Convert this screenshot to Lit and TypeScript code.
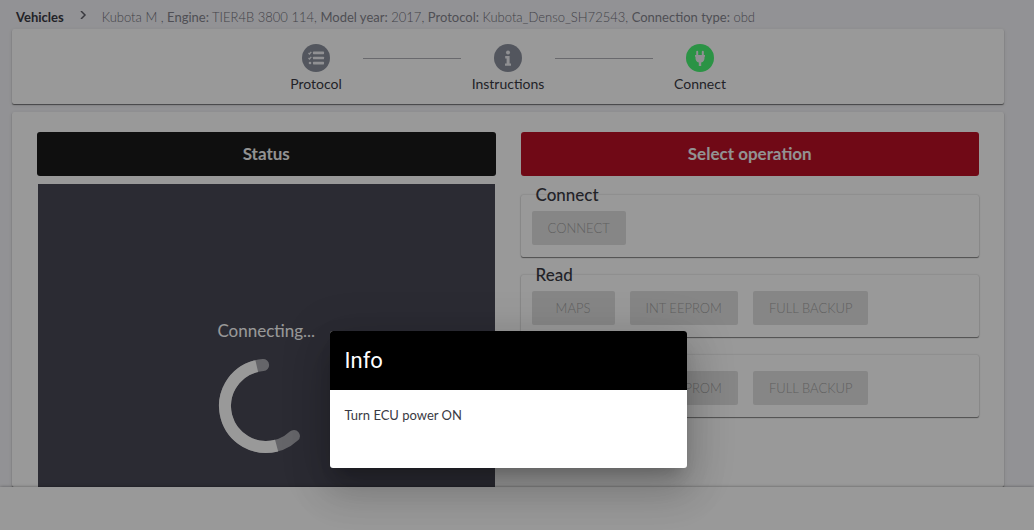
import { LitElement, html, css, svg } from "lit";
import { customElement } from "lit/decorators.js";

interface Step {
  label: string;
  icon: unknown;
  active?: boolean;
}

interface Group {
  title: string;
  actions: string[];
}

const listIcon = svg`
  <path d="M6.500 9l1 1 1.800-2.200M6.500 14l1 1 1.800-2.200" fill="none" stroke="currentColor" stroke-width="1.300"/>
  <circle cx="8" cy="19" r="1.300"/>
  <rect x="11" y="7.600" width="11" height="2.600" rx=".6"/>
  <rect x="11" y="12.700" width="11" height="2.600" rx=".6"/>
  <rect x="11" y="17.800" width="11" height="2.600" rx=".6"/>`;

const infoIcon = svg`
  <circle cx="14" cy="8.600" r="2"/>
  <path d="M11.200 12h4.400v7.400h1.400v2.400h-6v-2.400h1.600v-5h-1.400z"/>`;

const plugIcon = svg`
  <path d="M10.200 7.700a1 1 0 0 1 2 0V11h3.600V7.700a1 1 0 0 1 2 0V11h1.200v1.800h-.5v1.400a4.600 4.600 0 0 1-3.300 4.300V22h-2.400v-3.500a4.600 4.600 0 0 1-3.300-4.300v-1.400H9V11h1.200z"/>`;

@customElement("app-root")
export class AppRoot extends LitElement {
  static styles = css`
    :host {
      display: flex;
      flex-direction: column;
      position: relative;
      height: 100vh;
      overflow: hidden;
      background: #f4f4f8;
      color: #3a3a44;
      font: 13px/16px Lato, "Liberation Sans", sans-serif;
    }
    .page {
      flex: 1;
      min-height: 0;
      overflow: hidden;
      display: flex;
      flex-direction: column;
      gap: 8px;
      padding: 0 30px 0 12px;
    }
    .crumbs {
      display: flex;
      align-items: center;
      height: 21px;
      padding: 6px 0 0 4px;
      margin-bottom: -6px;
      white-space: nowrap;
    }
    .crumbs a {
      color: #3a3a44;
      font-weight: 700;
      text-decoration: none;
    }
    .chevron {
      width: 8px;
      height: 8px;
      margin: 0 15px 4px;
      fill: none;
      stroke: #60606a;
      stroke-width: 1.5;
    }
    .vehicle {
      color: #70707a;
      font-weight: 300;
    }
    .vehicle b {
      color: #84848e;
      font-weight: 400;
    }
    .card {
      background: #fff;
      border-radius: 2px;
      box-shadow: 0 1px 1px rgba(0, 0, 0, 0.5), 0 1px 4px rgba(0, 0, 0, 0.1);
    }
    .steps {
      display: flex;
      justify-content: center;
      flex: none;
      margin: 0;
      padding: 15px 0 12px;
      list-style: none;
      font-size: 14px;
    }
    .step {
      display: flex;
      align-items: flex-start;
    }
    .step + .step::before {
      content: "";
      width: 98px;
      margin-top: 14px;
      border-top: 1px solid #b0b0b6;
    }
    .step-body {
      width: 94px;
      display: flex;
      flex-direction: column;
      align-items: center;
      gap: 4px;
    }
    .step-icon {
      width: 28px;
      height: 28px;
      border-radius: 50%;
      background: #8b909d;
      color: #f0f1f5;
      fill: currentColor;
    }
    .step-icon.active {
      background: #48f573;
    }
    .work {
      flex: 1;
      min-height: 0;
      display: grid;
      grid-template-columns: 1fr 1fr;
      gap: 25px;
      padding: 20px 25px 0;
    }
    .column {
      display: flex;
      flex-direction: column;
      gap: 8px;
      min-height: 0;
    }
    .bar {
      flex: none;
      margin: 0;
      border-radius: 3px;
      background: #191919;
      color: #f4f4f4;
      font-size: 17px;
      font-weight: 700;
      line-height: 44px;
      text-align: center;
    }
    .bar.red {
      background: #bb0f25;
    }
    .status {
      flex: 1;
      display: flex;
      flex-direction: column;
      align-items: center;
      gap: 18px;
      margin: 0 1px;
      padding-top: 137px;
      background: #484855;
      color: #fff;
      font-size: 17px;
      line-height: 20px;
    }
    .spinner {
      flex: none;
      width: 96px;
      height: 96px;
      fill: none;
      stroke: #fff;
      stroke-width: 12;
    }
    .spinner .trail {
      stroke: #a9a9b0;
      stroke-linecap: round;
    }
    .groups {
      display: flex;
      flex-direction: column;
      gap: 8px;
      padding-top: 1px;
    }
    fieldset {
      display: flex;
      gap: 15px;
      min-width: 0;
      margin: 0;
      padding: 6px 11px 12px;
      border: 0;
      border-radius: 2px;
      box-shadow: 0 1px 1px rgba(0, 0, 0, 0.45), 0 0 2px rgba(0, 0, 0, 0.25);
    }
    legend {
      padding: 0 4px;
      font-size: 17px;
      line-height: 20px;
      font-weight: 500;
    }
    .action {
      height: 34px;
      min-width: 83px;
      padding: 0 16px;
      border: 0;
      border-radius: 2px;
      background: #e0e0e0;
      color: #a0a0a0;
      font: 300 13px/34px Lato, sans-serif;
      text-transform: uppercase;
    }
    .footer {
      flex: none;
      position: relative;
      height: 43px;
      background: #fff;
      box-shadow: 0 0 3px rgba(0, 0, 0, 0.4);
    }
    .overlay {
      position: absolute;
      inset: 0;
      display: flex;
      justify-content: center;
      align-items: flex-end;
      padding: 0 18px 62px 0;
      background: rgba(0, 0, 0, 0.4);
    }
    .dialog {
      width: 357px;
      overflow: hidden;
      border-radius: 3px;
      background: #fff;
      box-shadow: 0 11px 15px -7px rgba(0, 0, 0, 0.2),
        0 24px 38px 3px rgba(0, 0, 0, 0.14), 0 9px 46px 8px rgba(0, 0, 0, 0.12);
    }
    .dialog h2 {
      margin: 0;
      padding: 0 15px;
      background: #000;
      color: #fff;
      font: 400 22px/59px Roboto, sans-serif;
    }
    .dialog p {
      margin: 0;
      padding: 17px 15px 45px;
    }
  `;

  private steps: Step[] = [
    { label: "Protocol", icon: listIcon },
    { label: "Instructions", icon: infoIcon },
    { label: "Connect", icon: plugIcon, active: true },
  ];

  private groups: Group[] = [
    { title: "Connect", actions: ["Connect"] },
    { title: "Read", actions: ["Maps", "Int EEPROM", "Full backup"] },
    { title: "Write", actions: ["Maps", "Int EEPROM", "Full backup"] },
  ];

  render() {
    return html`
      <main class="page">
        <nav class="crumbs">
          <a href="#vehicles">Vehicles</a>
          <svg class="chevron" viewBox="0 0 8 8"><path d="M2 0l4 4-4 4" /></svg>
          <span class="vehicle"
            >Kubota M , <b>Engine:</b> TIER4B 3800 114, <b>Model year:</b> 2017,
            <b>Protocol:</b> Kubota_Denso_SH72543, <b>Connection type:</b> obd</span
          >
        </nav>
        <ol class="card steps">
          ${this.steps.map(
            (s) => html`<li class="step">
              <div class="step-body">
                <svg class="step-icon ${s.active ? "active" : ""}" viewBox="0 0 28 28">${s.icon}</svg>
                <span>${s.label}</span>
              </div>
            </li>`
          )}
        </ol>
        <div class="card work">
          <section class="column">
            <h2 class="bar">Status</h2>
            <div class="status" role="status">
              <span>Connecting...</span>
              <svg class="spinner" viewBox="0 0 96 96">
                <circle class="trail" cx="48" cy="47" r="41" pathLength="360"
                  stroke-dasharray="219 141" transform="rotate(47 48 47)" />
                <circle cx="48" cy="47" r="41" pathLength="360"
                  stroke-dasharray="182 178" transform="rotate(75 48 47)" />
              </svg>
            </div>
          </section>
          <section class="column">
            <h2 class="bar red">Select operation</h2>
            <div class="groups">
              ${this.groups.map(
                (g) => html`<fieldset>
                  <legend>${g.title}</legend>
                  ${g.actions.map((a) => html`<button class="action" type="button" disabled>${a}</button>`)}
                </fieldset>`
              )}
            </div>
          </section>
        </div>
      </main>
      <footer class="footer"></footer>
      <div class="overlay">
        <div class="dialog" role="dialog" aria-modal="true" aria-labelledby="dialog-title">
          <h2 id="dialog-title">Info</h2>
          <p>Turn ECU power ON</p>
        </div>
      </div>
    `;
  }
}
